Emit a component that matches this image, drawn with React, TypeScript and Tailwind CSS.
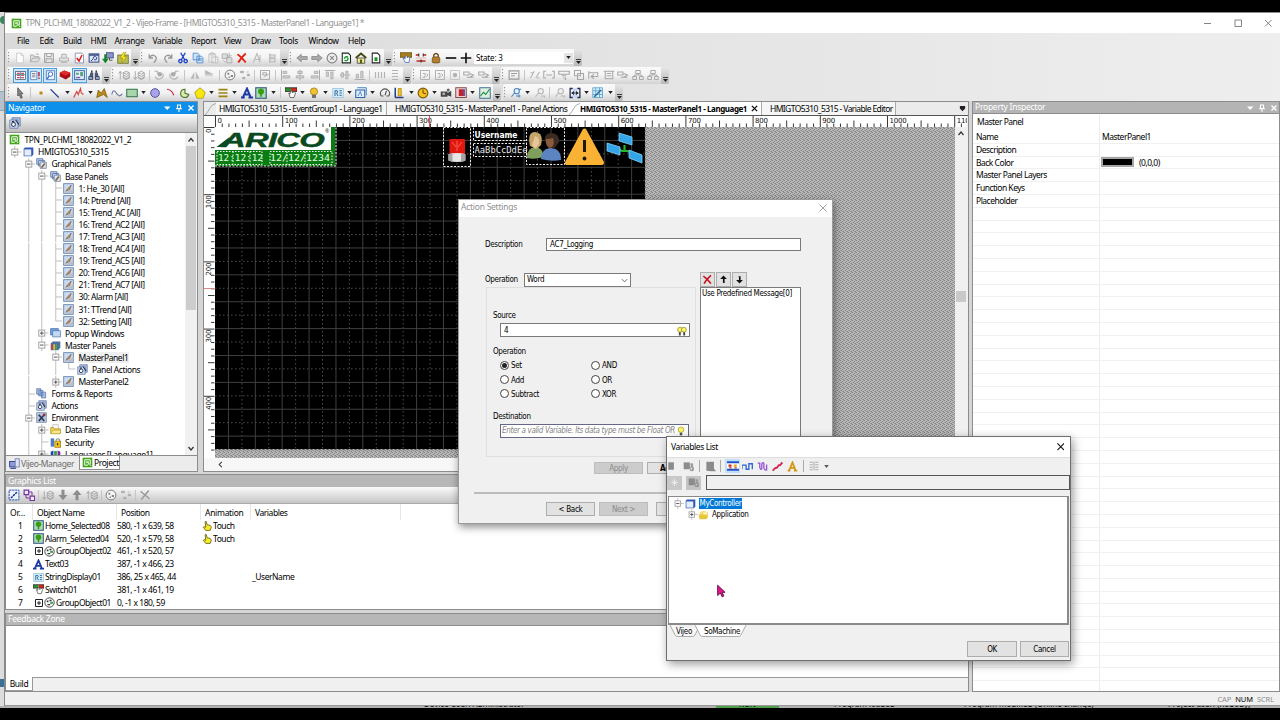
import React from "react";

const UI = "font-['Noto_Sans','Open_Sans',sans-serif]";
const TAHOMA = "font-['DejaVu_Sans_Condensed','DejaVu_Sans',sans-serif]";

const G = "#a3a3a3";

const ICONS: Record<string, React.ReactNode> = {
  app: (<><rect x="1" y="1" width="14" height="14" fill="#43a51c" /><path d="M4 4h8v6M4 4v8h4M8 12l2-3 3 4" fill="none" stroke="#fff" strokeWidth="1.4" /><rect x="6" y="6" width="4" height="3" fill="#c9efb5" /></>),
  page: <path d="M3.500 1.500h6l3 3v10h-9z M9.500 1.500v3h3" fill="#fbfbfb" stroke="#c2c2c2" />,
  open: <path d="M2 13V4h4l1 2h6v2M2 13l3-5h10l-3 5z M9 3q3-2 4 1" fill="#dedede" stroke={G} />,
  save: <path d="M2 2h12v12H2z M5 2v4h6V2 M4 14V9h8v5" fill="#e3e3e3" stroke={G} strokeWidth="1.300" />,
  print: <path d="M2 8h12v4H2z M5 8V3h6v5 M5 12v2h6v-2" fill="#e6e6e6" stroke={G} />,
  check: (<><path d="M3 1.500h9l2 2v11H3z" fill="#fff" stroke="#6f7fa5" /><path d="M5 8l3 4 4-8" fill="none" stroke="#e01818" strokeWidth="2" /></>),
  sim: (<><rect x="1.500" y="2.500" width="13" height="11" fill="#dbe4f8" stroke="#32467d" strokeWidth="1.300" /><path d="M2 4h12" stroke="#32467d" strokeWidth="2" /><path d="M4 12l3-3q-1-3 3-3 3 1 1 4-2 1-3 0" fill="none" stroke="#32467d" strokeWidth="1.300" /></>),
  down: (<><rect x="6" y="1" width="9" height="7" fill="#8b93c9" stroke="#2c3d72" /><path d="M10 8v3h4" stroke="#333" fill="none" /><path d="M3 3v6H0l4.500 6L9 9H6V3z" fill="#14822a" /></>),
  flash: (<><rect x="1" y="4" width="14" height="11" fill="#b6bd55" stroke="#676a28" /><path d="M9 0L4 8h4l-2 7 7-9H9l3-6z" fill="#ffe623" stroke="#967d10" strokeWidth=".7" /></>),
  undo: <path d="M3 3v5h5M3 8q3-5 7-3t1 7l-2 2" fill="none" stroke="#989898" strokeWidth="1.800" />,
  redo: <path d="M13 3v5H8M13 8q-3-5-7-3t-1 7l2 2" fill="none" stroke="#989898" strokeWidth="1.800" />,
  cut: <path d="M5 1l5 9M11 1l-5 9M4.500 10a2.200 2.200 0 1 0 .1 0M11.500 10a2.200 2.200 0 1 0 .1 0" fill="none" stroke="#1d46c5" strokeWidth="1.800" />,
  copy: <path d="M1.500 1.500h6l2 2v7h-8z M6.500 5.500h6l2 2v7h-8z M8 9h5M8 11h5" fill="#cfe5fb" stroke="#3d7fc4" />,
  paste: <path d="M2.500 2.500h9v11h-9z M5 1h4v3H5z M6.500 6.500h8v8h-8z" fill="#ececec" stroke="#bababa" />,
  pastex: <path d="M1.500 2.500h7v6h-7z M7.500 7.500h7v7h-7z M11 1v5M8 4l3 3 3-3M3 11l3 3" fill="#ddd" stroke={G} />,
  redx: <path d="M2 3q6 4 11 11M13 2Q7 7 3 14" fill="none" stroke="#e3200c" strokeWidth="2.400" />,
  ga: <path d="M3 14L8 2l4 12M5 10h6M12 4v8" fill="none" stroke="#bbb" strokeWidth="1.500" />,
  gtree: <path d="M5 2v12M5 4h7v3H5M5 9h7v4H5" fill="none" stroke="#b4b4b4" strokeWidth="1.500" />,
  left: <path d="M1 8l6-5v3h8v4H7v3z" fill="#aaa" stroke="#858585" />,
  right: <path d="M15 8L9 3v3H1v4h8v3z" fill="#aaa" stroke="#858585" />,
  stop: (<><circle cx="8" cy="8" r="6.500" fill="#eee" stroke="#888" strokeWidth="1.600" /><path d="M5.500 5.500l5 5M10.500 5.500l-5 5" stroke="#888" strokeWidth="1.500" /></>),
  refresh: (<><path d="M3 1.500h8l3 3v10H3z" fill="#f3fff2" stroke="#222" strokeWidth="1.400" /><path d="M6 9q1-4 5-2M11 8q-1 5-5 3" fill="none" stroke="#0d9326" strokeWidth="1.700" /></>),
  home: (<><path d="M3 8v7h10V8z" fill="#f3ef9d" stroke="#333" /><path d="M1 8l7-6 7 6" fill="none" stroke="#444a12" strokeWidth="2.400" /><rect x="6.500" y="10" width="3" height="5" fill="#5b5b18" /></>),
  gpage: (<><path d="M3 1.500h7l3 3v10H3z" fill="#fff" stroke="#222" strokeWidth="1.400" /><rect x="6" y="7" width="4" height="5" fill="#1a962a" /></>),
  hand: (<><rect x="0" y="1" width="16" height="6" fill="#a77d1d" stroke="#65490b" /><path d="M4 8l3 6h5l1-6-2-2-1 2-1-3-2 1v3z" fill="#fff" stroke="#4064b0" /></>),
  state: (<><path d="M1 4h4M11 4h4M2 12h12" stroke="#c42318" strokeWidth="1.800" /><path d="M5 2v4M11 2v4M8 10v4" stroke="#333" strokeWidth="1.500" /><path d="M1 8h14" stroke="#d9a395" /></>),
  lock: (<><path d="M5 7V4q3-4 6 0v3" fill="none" stroke="#6a4a12" strokeWidth="1.800" /><rect x="3" y="6.500" width="10" height="8" rx="2" fill="#b67d2c" stroke="#6a4a12" /></>),
  minus: <path d="M1 8h14" stroke="#111" strokeWidth="2.200" />,
  plus: <path d="M1 8h14M8 1v14" stroke="#111" strokeWidth="2.200" />,
  t1: (<><rect x="1" y="2" width="14" height="12" fill="#fff" stroke="#345" /><path d="M3 5h4M9 5h4M3 8h4M9 8h4M3 11h4M9 11h4" stroke="#c23c7b" strokeWidth="1.700" /><path d="M8 2v12M1 6.500h14" stroke="#3a8c61" /></>),
  t2: (<><path d="M1 2h9v12H1z" fill="#fff" stroke="#3161ac" /><path d="M3 5h5M3 7.500h5M3 10h5" stroke="#446" /><path d="M13 3v6M13 11v2" stroke="#c01b1b" strokeWidth="2" /></>),
  t3: (<><path d="M2 1h12v13H2z" fill="#eaf4ff" stroke="#3161ac" /><circle cx="8" cy="6" r="3.200" fill="#fff" stroke="#2b64c0" strokeWidth="1.300" /><path d="M6 9l-3 4" stroke="#2b64c0" strokeWidth="1.800" /></>),
  red3d: (<><path d="M1 5l6-3 8 3v5l-6 4-8-4z" fill="#a80f16" /><path d="M1 5l6-3 8 3-6 4z" fill="#e12a2a" /></>),
  t5: (<><rect x="1" y="1" width="14" height="13" fill="#e8f0ff" stroke="#36588e" strokeWidth="1.300" /><path d="M3 4h4v3H3zM9 3h4v6H9z" fill="#58a07e" /><path d="M3 11h6" stroke="#7b5ca8" strokeWidth="2" /></>),
  find: (<><path d="M3 5h4v9H1zM9 5h4l2 9H9z" fill="#4b5978" /><path d="M4 2h2v3H4zM10 2h2v3h-2z" fill="#2b364f" /><path d="M1 10h5v4H1zM10 10h5v4h-5z" fill="#91a4c9" stroke="#333d55" /></>),
  layers: <path d="M3 14V4M1 6l2-3 2 3M7 5l4-2 4 2-4 2zM7 5v7l4 2 4-2V5M7 8l4 2 4-2M7 11l4 2 4-2" fill="none" stroke={G} strokeWidth="1.200" />,
  layersd: <path d="M3 3v10M1 11l2 3 2-3M7 5l4-2 4 2-4 2zM7 5v7l4 2 4-2V5M7 8l4 2 4-2M7 11l4 2 4-2" fill="none" stroke={G} strokeWidth="1.200" />,
  rotl: (<><path d="M2 3h4v3M13 6q2 5-3 7t-7-3" fill="none" stroke="#b3b3b3" strokeWidth="1.500" /><circle cx="9" cy="7" r="3" fill="#aaa" /></>),
  rotr: (<><path d="M14 3h-4v3M3 6q-2 5 3 7t7-3" fill="none" stroke="#b3b3b3" strokeWidth="1.500" /><circle cx="7" cy="7" r="3" fill="#aaa" /></>),
  flip: <path d="M2 13L7 4v9zM9 13V3l5 10z" fill="#bababa" />,
  flipv: <path d="M3 2l10 5H3zM3 9h10" fill="#b5b5b5" stroke="#bbb" />,
  group: (<><circle cx="8" cy="8" r="6.500" fill="#f6f6f6" stroke="#777" strokeWidth="1.300" /><path d="M4.500 5h2.500v2.500H4.500zM9 8h3v2.500H9zM6 10h2v2H6z" fill="#888" /></>),
  ungroup: <path d="M2 3h4v2H2zM10 4h3M11 7h3v2h-3zM5 11h3v2H5z" fill="#aaa" stroke="#aaa" />,
  box: <path d="M2 2h12v12H2zM5 5h5v3H5zM7 10l6-3" fill="none" stroke="#aaa" strokeWidth="1.300" />,
  al1: (<><path d="M2 1v14" stroke="#aaa" strokeWidth="1.300" /><path d="M4 3h5v3H4zM4 9h9v3H4z" fill="#cfcfcf" stroke="#aaa" /></>),
  al2: (<><path d="M8 1v14" stroke="#aaa" strokeWidth="1.300" /><path d="M5 3h6v3H5zM3 9h10v3H3z" fill="#cfcfcf" stroke="#aaa" /></>),
  al3: (<><path d="M14 1v14" stroke="#aaa" strokeWidth="1.300" /><path d="M7 3h5v3H7zM3 9h9v3H3z" fill="#cfcfcf" stroke="#aaa" /></>),
  al4: (<><path d="M1 2h14" stroke="#aaa" strokeWidth="1.300" /><path d="M3 4h3v6H3zM9 4h3v9H9z" fill="#cfcfcf" stroke="#aaa" /></>),
  al5: (<><path d="M1 8h14" stroke="#aaa" strokeWidth="1.300" /><path d="M3 5h3v6H3zM9 3h3v10H9z" fill="#cfcfcf" stroke="#aaa" /></>),
  al6: (<><path d="M1 14h14" stroke="#aaa" strokeWidth="1.300" /><path d="M3 7h3v5H3zM9 3h3v9H9z" fill="#cfcfcf" stroke="#aaa" /></>),
  sp1: <path d="M2 4v8M6 4v8M10 4v8M14 4v8" fill="none" stroke="#b3b3b3" strokeWidth="1.500" />,
  sp2: <path d="M4 2h8M4 6h8M4 10h8M4 14h8" fill="none" stroke="#b3b3b3" strokeWidth="1.300" />,
  gbox: <path d="M2 2h12v12H2zM5 6h3v5H5M10 6l2 2-2 2" fill="none" stroke="#b0b0b0" strokeWidth="1.300" />,
  gdot: (<><path d="M2 2h12v12H2z" fill="none" stroke="#bbb" /><circle cx="8" cy="8" r="3" fill="#b3b3b3" /></>),
  gform: <path d="M1.500 2.500h13v11h-13zM4 6h8M4 9h5" fill="none" stroke="#9a9a9a" strokeWidth="1.500" />,
  gline: <path d="M2 12L7 3M9 12l5-8M2 5h3M11 12h3" fill="none" stroke="#b0b0b0" strokeWidth="1.400" />,
  gbr: <path d="M4 3H1v9h3M12 3h3v9h-3M4 8h8" fill="none" stroke="#a7a7a7" strokeWidth="1.400" />,
  gfun: <path d="M1 3h14v4H1zM5 9h6M7 12h3v3" fill="none" stroke="#a7a7a7" strokeWidth="1.500" />,
  gst: <path d="M2 2h8v7H2zM6 6h8v8H6z" fill="none" stroke="#a7a7a7" strokeWidth="1.400" />,
  gpile: <path d="M1 3h14M3 3v10h10V3M5 6h6M5 9h6" fill="none" stroke="#a7a7a7" strokeWidth="1.400" />,
  garr: <path d="M1 3v10M1 5h12v5H5M8 7l-4 3 4 3" fill="none" stroke="#a7a7a7" strokeWidth="1.400" />,
  garr2: <path d="M1 4h7v4H1zM5 11h9M9 6l5 2-5 3" fill="none" stroke="#a7a7a7" strokeWidth="1.400" />,
  gtr: <path d="M5 2h6v4H5zM1 10h5v4H1zM10 10h5v4h-5zM8 6v2H3v2M8 8h5v2" fill="none" stroke="#a7a7a7" strokeWidth="1.300" />,
  cursor: <path d="M5 1l7 8H9l2 5-2 1-2-5-2 2z" fill="#888" stroke="#444" />,
  dot: <rect x="6" y="6" width="4" height="4" fill="#c28a12" />,
  line: <path d="M2 3l11 11" stroke="#243f95" strokeWidth="1.500" />,
  poly: <path d="M1 14l4-8 2 4 3-8 1 6 3 2" fill="none" stroke="#d1403a" strokeWidth="1.500" />,
  bez: <path d="M1 14L3 4l4 4 4-6 4 12-5-4z" fill="#b98b1d" stroke="#7e5a0b" />,
  curve: <path d="M1 10Q3 1 7 8t8 1" fill="none" stroke="#68739c" strokeWidth="1.500" />,
  rect: <rect x="1" y="3" width="14" height="10" fill="#a8d6ac" stroke="#2d7045" strokeWidth="1.300" />,
  circ: <circle cx="8" cy="8" r="5.800" fill="#a7a4e8" stroke="#5450a0" strokeWidth="1.300" />,
  arc: <path d="M4 3q7 1 9 8" fill="none" stroke="#cf2b3d" strokeWidth="1.600" />,
  pie: <path d="M8 3a5.500 5.500 0 1 0 5 7L8 8.500z" fill="#d9edab" stroke="#58763a" strokeWidth="1.500" />,
  pent: <path d="M8 1l7 6-3 8H4L1 7z" fill="#f8e70e" stroke="#a8920d" />,
  lines: <path d="M2 3.500h12M2 8h12M2 12.500h12" stroke="#9d8316" strokeWidth="2.200" />,
  A: <path d="M0 14h5M10 14h6M2.500 14L8 2l5 12M5 10h6" fill="none" stroke="#1c38a4" strokeWidth="2.600" />,
  tree: (<><rect x="1" y="1" width="14" height="14" fill="#a6dcb5" stroke="#3c5c86" strokeWidth="1.500" /><circle cx="8" cy="6" r="4" fill="#379d12" /><path d="M7 9h2v4h3H5h2z" fill="#4c7d18" /></>),
  sw: (<><rect x="0" y="1" width="8" height="5" fill="#2f912d" /><rect x="8" y="1" width="8" height="5" fill="#d02b20" /><path d="M0 1h16v5H0z" fill="none" stroke="#222" /><path d="M5 8l2 6h5l2-6-2-2-2 2-1-3-2 1v3z" fill="#fff" stroke="#444" /></>),
  bulb: (<><circle cx="8" cy="6" r="4.800" fill="#f0c431" stroke="#a1710c" /><path d="M6 11h4v3H6z" fill="#777" stroke="#555" /></>),
  ylamp: (<><circle cx="8" cy="6" r="4.500" fill="#fbf46c" stroke="#9a8b16" /><path d="M6 11h4v4H6z" fill="#555" /></>),
  lamps: (<><circle cx="5" cy="6" r="4" fill="#fbf46c" stroke="#847510" /><circle cx="11" cy="6" r="4" fill="#fbf46c" stroke="#847510" /><path d="M3 10h3v5H3zM10 10h3v5h-3z" fill="#444" /></>),
  strd: (<><rect x="1" y="2" width="14" height="12" fill="#d8edf8" stroke="#8fc1de" /><path d="M4 12V5h3q2 2-1 3l2 4M10 5h3M10 8h3M10 11h3" fill="none" stroke="#24659a" strokeWidth="1.300" /></>),
  ab: (<><path d="M3 1h12v10" fill="none" stroke="#3d7ec7" strokeWidth="1.300" /><rect x="1" y="4" width="12" height="10" fill="#e2f0ff" stroke="#2c64ab" strokeWidth="1.400" /><path d="M4 12l3-6 2 6" fill="none" stroke="#2c64ab" /></>),
  gauge: <path d="M3 12a6 6 0 1 1 10 0M8 11l2-6M3 12h3M10 12h3" fill="none" stroke="#555" strokeWidth="1.500" />,
  bars: (<><path d="M3 1v13M3 14h11" stroke="#223c8e" strokeWidth="2" /><path d="M7 2h4v10H7z" fill="#f0c81c" stroke="#ab7c07" /></>),
  meter: (<><circle cx="8" cy="8" r="6.500" fill="#f2c21e" stroke="#7c560b" strokeWidth="1.500" /><path d="M8 3v5l4 1" stroke="#7c3b0b" strokeWidth="1.300" fill="none" /></>),
  cam: (<><path d="M1 6h9v7H1zM10 8l5-3v8l-5-2z" fill="#454545" /><circle cx="5" cy="9" r="2" fill="#aaa" /><circle cx="11" cy="4" r="2" fill="#666" /></>),
  reda: (<><rect x="1" y="1" width="14" height="13" fill="#e4d8dc" stroke="#844" strokeWidth="1.300" /><path d="M5 3h6v9H5z" fill="#cc1e24" /><path d="M12 3v9" stroke="#339" strokeWidth="2" /></>),
  trend: (<><rect x="1" y="1" width="14" height="14" fill="#dbf0e0" stroke="#3e6a8f" strokeWidth="1.300" /><path d="M2 12l4-5 3 3 5-7" fill="none" stroke="#1a8b3d" strokeWidth="1.500" /></>),
  zoomc: (<><circle cx="9" cy="5.500" r="3.500" fill="#e4f2ff" stroke="#4c84ba" strokeWidth="1.400" /><path d="M2 13l4-5M11 3h4M8 12h6M12 10v4" fill="none" stroke="#4c84ba" strokeWidth="1.500" /></>),
  zoomg: (<><circle cx="9" cy="5.500" r="3.500" fill="#efefef" stroke="#b5b5b5" strokeWidth="1.400" /><path d="M2 13l4-5M9 12h5v2" fill="none" stroke="#b5b5b5" strokeWidth="1.500" /></>),
  fit: (<><path d="M1.500 1v14M14.500 1v14M1 2h4M11 2h4M1 14h4M11 14h4" stroke="#222c50" strokeWidth="1.700" /><path d="M5 2h6v12H5z" fill="#c2d1f4" /><path d="M3 8h10M4 8l2-2v4zM12 8l-2-2v4z" fill="#222" stroke="#222" /></>),
  gridi: (<><path d="M1 1h13v13H1zM1 5h13M1 10h13M5 1v13M10 1v13" fill="#d5effa" stroke="#4b9bc0" /><path d="M3 13l9-9" stroke="#2b64a6" strokeWidth="2" /></>),
  device: (<><path d="M3 2h12v10l-2 3H1V4z" fill="#3156b4" /><rect x="2" y="5" width="10" height="9" fill="#e4eefc" /></>),
  panels: (<><path d="M1 1h9v8H1zM3.500 3.500h9v8h-9z" fill="#c8d5ee" stroke="#5372a8" strokeWidth="1.200" /><path d="M6 6h9v9H6z" fill="#e6e6e6" stroke="#5d7091" /><path d="M8 14l5-6" stroke="#7c6a52" strokeWidth="2.400" /></>),
  panel: (<><rect x="1" y="1" width="14" height="14" fill="#cadcf3" stroke="#6580ab" strokeWidth="1.300" /><path d="M2 14h13V8z" fill="#b8bfca" /><path d="M4 12l3-4 5-5-2 6z" fill="#c98a52" stroke="#72523a" strokeWidth=".8" /></>),
  popup: (<><rect x="1" y="1" width="11" height="9" fill="#6e9fe0" stroke="#3e66a5" /><rect x="4" y="4" width="11" height="9" fill="#bfd8f6" stroke="#4c70a3" /></>),
  master: (<><path d="M1 5l3-3h11v9l-3 4H1z" fill="#4b6fa0" /><path d="M3 6v8" stroke="#da392d" strokeWidth="2.200" /><path d="M6 6v8" stroke="#edcb32" strokeWidth="2.200" /><path d="M9 6v8" stroke="#42aa42" strokeWidth="2.200" /></>),
  actions: (<><path d="M4 1h11v11H4z" fill="#a9bbdf" stroke="#6479a8" /><path d="M1 4h11v11H1z" fill="#c9d5ec" stroke="#6479a8" /><circle cx="6" cy="10" r="2.600" fill="#fff" stroke="#32415f" strokeWidth="1.400" /><path d="M9 4l4 6M4 6l3 0" stroke="#222f4f" strokeWidth="1.500" /></>),
  forms: <path d="M1 1h6v8H1zM4 3.500h6v8H4zM8 6h6v8.500H8z" fill="#a9c0ea" stroke="#4f6da6" />,
  env: (<><rect x="1" y="1" width="14" height="14" fill="#b5c3dc" stroke="#6f83a6" /><path d="M4 4l8 9M12 4l-8 9" stroke="#2c3753" strokeWidth="2.300" /><circle cx="12" cy="4" r="2" fill="#933" /></>),
  folder: (<><path d="M4 1h8v8H4z" fill="#fff" stroke="#aaa" /><path d="M1 14V5h4l1 2h9v7z" fill="#f3d54e" stroke="#ae8b1b" /><path d="M1 14l3-5h12l-2 5z" fill="#fbe990" stroke="#ae8b1b" strokeWidth=".7" /></>),
  folderOpen: (<><path d="M3 5q4-4 11 0v8H3z" fill="#f1dd71" /><path d="M1 8h9l4-3v8l-3 2H2z" fill="#e8c63c" /><path d="M8 5h5v3H8z" fill="#fff8c9" /></>),
  security: (<><rect x="1" y="2" width="5" height="12" fill="#4f7cc4" /><path d="M9 7V4q2.500-3 5 0v3" fill="none" stroke="#888" strokeWidth="1.500" /><rect x="7" y="6" width="8.500" height="9" fill="#f1c01b" stroke="#9b7c08" /><path d="M11 9v3" stroke="#333" strokeWidth="1.800" /></>),
  lang: (<><path d="M1 4l4-2v13H1z" fill="#2442a8" /><path d="M6 3h4v12H6z" fill="#349a43" /><path d="M11 2l4 2v11h-4z" fill="#7a27a3" /></>),
  vman: (<><rect x="1" y="5" width="9" height="8" fill="#8d9ed8" stroke="#243a85" strokeWidth="1.300" /><path d="M9 1h6v12H9z" fill="#dce3f2" stroke="#5c6b99" /><path d="M2 15h8" stroke="#243a85" strokeWidth="1.500" /></>),
  glPen: (<><path d="M1.500 1.500h13v13h-13z" fill="#eef4ff" stroke="#1f4db0" strokeDasharray="3 1" strokeWidth="1.300" /><path d="M4 12l8-8" stroke="#162f83" strokeWidth="2" strokeDasharray="3 1" /></>),
  glLink: (<><path d="M1.500 1.500h6v6h-6zM9.500 9.500h6v6h-6z" fill="#f4e9fb" stroke="#7434a0" strokeWidth="1.600" /><path d="M4 8v4h5M8 4h4v5" fill="none" stroke="#7434a0" strokeWidth="1.300" /></>),
  adown: <path d="M6 1h4v7h4l-6 7-6-7h4z" fill="#8d8d8d" />,
  aup: <path d="M6 15h4V8h4L8 1 2 8h4z" fill="#8d8d8d" />,
  gx: <path d="M2 3l12 10M13 2L3 14" stroke="#999" strokeWidth="1.900" />,
  touch: <path d="M5 1h2l1 5 5 1 2 3-2 5H6l-4-5 1-1 3 1z" fill="#f9ee22" stroke="#3e3a08" strokeWidth="1.100" />,
  groupb: (<><circle cx="8" cy="8" r="6.800" fill="#fff" stroke="#333" strokeWidth="1.300" /><path d="M4 5h2.500v2.500H4zM8 4h3v2H8zM5 10h4v2H5z" fill="#333" /><rect x="9" y="7" width="4" height="3" fill="#37a34b" /></>),
  xbtn: <path d="M2 3q6 4 11 11M13 2Q7 7 3 14" fill="none" stroke="#c5101c" strokeWidth="2.300" />,
  upb: <path d="M8 1l6 6h-4v7H7V7H2z" fill="#111" />,
  dnb: <path d="M8 15l6-6h-4V2H6l1 2v5H2z" fill="#111" />,
  sq: <path d="M2 2h9v12H2z" fill="#8c8c8c" />,
  sqs: (<><path d="M1 2h9v10H1z" fill="#8c8c8c" /><path d="M11 4h3v9h-3M11 9v5h4V9z" fill="#a0a0a0" stroke="#8c8c8c" /></>),
  blob: <path d="M2 1h11v10l3 4H9l-7-1z" fill="#8a8a8a" />,
  disc: (<><rect x="0" y="2" width="16" height="12" fill="#fff" /><path d="M0 3h16M0 13h16" stroke="#2151c4" strokeWidth="2.500" /><path d="M2 6h4v3H2z" fill="#d02525" /><path d="M9 6h4v3H9z" fill="#e5a21a" /><path d="M3 10.500h3M10 10.500h3" stroke="#b33" strokeWidth="1.500" /></>),
  step: <path d="M0 12V6h6v6h4V4h5v8" fill="none" stroke="#2f64d4" strokeWidth="1.900" />,
  wave: <path d="M1 3h3v6q1 5 3 2V4q2-3 3 0v6q1 4 4 3V5" fill="none" stroke="#9355d3" strokeWidth="1.900" />,
  diag: <path d="M1 14l4-4h2l3-4h2l3-4" fill="none" stroke="#d32350" strokeWidth="2.600" />,
  goldA: <path d="M1 14h4M10 14h5M3 14L8 2l4.500 12M5 10h6" fill="none" stroke="#d59512" strokeWidth="2.500" />,
  glist: <path d="M1 2h5M1 6h5M1 10h5M1 14h5M10 2h5M10 6h5M10 10h5M10 14h5M8 1v14" stroke="#9c9c9c" strokeWidth="1.300" />,
  star: <path d="M8 2v12M2 8h12M4 4l8 8M12 4l-8 8" stroke="#f2f2f2" strokeWidth="1.300" />,
};

function Icon({ n, c = "size-[12px]" }: { n: string; c?: string }) {
  return (
    <svg viewBox="0 0 16 16" className={`${c} shrink-0`}>
      {ICONS[n]}
    </svg>
  );
}

function Tool({ n }: { n: string }) {
  if (n === "|") return <span className="mx-[2px] h-[11px] w-px shrink-0 bg-[#c6c6c6]" />;
  if (n === "v")
    return (
      <span className="flex w-[8px] shrink-0 justify-center">
        <svg viewBox="0 0 6 4" className="h-[3px] w-[5px]"><path d="M0 0h6L3 4z" fill="#222" /></svg>
      </span>
    );
  if (n[0] === "*")
    return (
      <span className="flex h-[15px] w-[14.5px] shrink-0 items-center justify-center border border-[#4da0e0] bg-[#cbe6fb]">
        <Icon n={n.slice(1)} c="size-[11px]" />
      </span>
    );
  return <span className="flex w-[14px] shrink-0 justify-center"><Icon n={n} /></span>;
}

function Bar({ w, items, children }: { w: string; items: string; children?: React.ReactNode }) {
  return (
    <div className={`${w} flex h-[17px] shrink-0 items-center rounded-[2px] bg-linear-to-b from-[#fafafa] via-[#f3f3f3] to-[#d2d2d2]`}>
      <svg viewBox="0 0 4 12" className="mr-[2px] h-[12px] w-[4px] shrink-0"><path d="M1.500 0v12" stroke="#999" strokeWidth="1.200" strokeDasharray="1.2 1.800" /></svg>
      <div className="flex min-w-0 flex-1 items-center justify-between">
        {items.split(" ").map((n, i) => <Tool key={i} n={n} />)}
        {children}
      </div>
      <span className="ml-[1px] flex h-full w-[8px] shrink-0 items-end justify-center rounded-r-[2px] bg-linear-to-b from-[#e6e6e6] to-[#b9b9b9] pb-[2px]">
        <svg viewBox="0 0 6 6" className="size-[5px]"><path d="M0 .6h6" stroke="#222" /><path d="M0 2.500h6L3 6z" fill="#222" /></svg>
      </span>
    </div>
  );
}

const TREE: [string, string, string][] = [
  ["", "app", "TPN_PLCHMI_18082022_V1_2"],
  ["-", "device", "HMIGTO5310_5315"],
  [" -", "panels", "Graphical Panels"],
  [" |-", "panels", "Base Panels"],
  [" ||t", "panel", "1: He_30 [All]"],
  [" ||t", "panel", "14: Ptrend [All]"],
  [" ||t", "panel", "15: Trend_AC [All]"],
  [" ||t", "panel", "16: Trend_AC2 [All]"],
  [" ||t", "panel", "17: Trend_AC3 [All]"],
  [" ||t", "panel", "18: Trend_AC4 [All]"],
  [" ||t", "panel", "19: Trend_AC5 [All]"],
  [" ||t", "panel", "20: Trend_AC6 [All]"],
  [" ||t", "panel", "21: Trend_AC7 [All]"],
  [" ||t", "panel", "30: Alarm [All]"],
  [" ||t", "panel", "31: TTrend [All]"],
  [" ||l", "panel", "32: Setting [All]"],
  [" |+", "popup", "Popup Windows"],
  [" |-", "master", "Master Panels"],
  [" | -", "panel", "MasterPanel1"],
  [" | |l", "actions", "Panel Actions"],
  [" | +", "panel", "MasterPanel2"],
  [" t", "forms", "Forms & Reports"],
  [" t", "actions", "Actions"],
  [" -", "env", "Environment"],
  [" |+", "folder", "Data Files"],
  [" |t", "security", "Security"],
  [" |+", "lang", "Languages [Language1]"],
];

function Guide({ k }: { k: string }) {
  const d: Record<string, string> = { "|": "M6.750 0v12.100", t: "M6.750 0v12.100M6.750 6h6.750", l: "M6.750 0v6h6.750", "+": "M6.750 0v12.100M10 6h3.500", "-": "M6.750 0v12.100M10 6h3.500", " ": "" };
  return (
    <svg viewBox="0 0 13.500 12.100" className="h-full w-[13.500px] shrink-0">
      <path d={d[k]} stroke="#b9b9b9" strokeWidth=".9" fill="none" />
      {(k === "+" || k === "-") && (
        <>
          <rect x="3.800" y="3.100" width="6" height="6" fill="#fff" stroke="#9a9a9a" strokeWidth=".9" />
          <path d={k === "+" ? "M5 6.100h3.600M6.800 4.300v3.600" : "M5 6.100h3.600"} stroke="#444" strokeWidth=".9" />
        </>
      )}
    </svg>
  );
}

function HeadIcons({ gap = "gap-[4px]" }: { gap?: string }) {
  return (
    <span className={`flex items-center ${gap}`}>
      <svg viewBox="0 0 8 8" className="size-[8px]"><path d="M1 2.500h6.500L4.200 6z" fill="#fff" /></svg>
      <svg viewBox="0 0 8 8" className="size-[8px]"><path d="M2.500 1h3v3.500h-3zM1 4.700h6M4 5v3" fill="none" stroke="#fff" strokeWidth="1.100" /></svg>
      <svg viewBox="0 0 8 8" className="size-[8px]"><path d="M1.500 1.500l5 5M6.500 1.500l-5 5" stroke="#fff" strokeWidth="1.400" /></svg>
    </span>
  );
}

function Navigator() {
  return (
    <section className="flex h-[371px] w-[193px] shrink-0 flex-col border border-[#8c8c8c] bg-[#f0f0f0]">
      <header className="flex h-[12px] shrink-0 items-center justify-between bg-[#0d90ec] pr-[2px] pl-[2px] tracking-[-0.250px] text-white">
        <span>Navigator</span>
        <HeadIcons />
      </header>
      <div className="flex h-[18px] shrink-0 items-center bg-linear-to-b from-[#fbfbfb] to-[#bdbdbd] pl-[3px]"><Icon n="actions" /></div>
      <div className="flex h-[324px] shrink-0 overflow-hidden border-y border-[#8c8c8c] bg-white">
        <div className="flex-1 overflow-hidden pt-[0.700px] pl-[2px]">
          {TREE.map(([g, ic, t], i) => (
            <div key={i} className="flex h-[12.100px] items-center">
              {g.split("").map((k, j) => <Guide key={j} k={k} />)}
              <span className="flex w-[13.500px] justify-center"><Icon n={ic} c="size-[11px]" /></span>
              <span className={t === "MasterPanel1" ? "ml-[2px] bg-[#efefef] px-px leading-[11px] whitespace-nowrap" : "ml-[3px] leading-[11px] whitespace-nowrap"}>{t}</span>
            </div>
          ))}
        </div>
        <div className="flex w-[12px] flex-col items-center bg-[#f1f1f1]">
          <svg viewBox="0 0 8 12" className="h-[13px] w-[8px]"><path d="M1.500 8L4 5l2.500 3" fill="none" stroke="#333" strokeWidth="1.200" /></svg>
          <div className="h-[164px] w-[10px] bg-[#cdcdcd]" />
          <svg viewBox="0 0 8 12" className="mt-auto h-[12px] w-[8px]"><path d="M1.500 4L4 7l2.500-3" fill="none" stroke="#333" strokeWidth="1.200" /></svg>
        </div>
      </div>
      <div className="flex h-[14px] items-center bg-[#ececec] leading-[11px]">
        <span className="flex h-full w-[73px] items-center gap-[1px] pl-[3px] tracking-[-0.400px] whitespace-nowrap text-[#6b6b6b]"><Icon n="vman" c="size-[11px]" />Vijeo-Manager</span>
        <span className="flex h-full w-[41px] items-center gap-[1px] border-x border-b border-[#8c8c8c] bg-white pl-[2px]"><Icon n="app" c="size-[11px]" />Project</span>
      </div>
    </section>
  );
}

const U = 0.672;

function Canvas() {
  const xs = Array.from({ length: 32 }, (_, i) => i + 1);
  const ys = Array.from({ length: 24 }, (_, i) => i + 1);
  return (
    <svg width="751" height="331" viewBox="204 127 751 331" className="shrink-0">
      <defs>
        <pattern id="dither" width="4" height="4" patternUnits="userSpaceOnUse">
          <rect width="4" height="4" fill="#b9b9b9" />
          <path d="M0 0h1v1H0zM2 1h1v1H2zM1 2h1v1H1zM3 3h1v1H3z" fill="#848484" />
          <path d="M3 0h1v1H3zM0 2h1v1H0zM2 3h1v1H2z" fill="#9d9d9d" />
        </pattern>
      </defs>
      <rect x="215" y="127" width="740" height="331" fill="url(#dither)" />
      <rect x="215" y="127" width="430" height="322" fill="#000" />
      {xs.map((i) => <path key={i} d={`M${215 + i * 13.44} 127V449`} stroke={i % 2 ? "#3f3f3f" : "#4d4d4d"} strokeDasharray={i % 2 ? undefined : "1.500 2.500"} />)}
      {ys.map((i) => <path key={i} d={`M215 ${127 + i * 13.44}H645`} stroke={i % 2 ? "#3f3f3f" : "#4d4d4d"} strokeDasharray={i % 2 ? undefined : "1.500 2.500"} />)}
      <rect x="204" y="127" width="11" height="331" fill="#fff" />
      {Array.from({ length: 49 }, (_, i) => (
        <path key={i} d={`M${i % 10 === 0 ? 204 : i % 5 === 0 ? 208 : 211} ${127.5 + i * 10 * U}H214.500`} stroke="#222" strokeWidth=".9" />
      ))}
      {[0, 100, 200, 300, 400].map((v) => (
        <text key={v} transform={`translate(210.500 ${129 + v * U + (v ? 12 : 4)}) rotate(-90)`} fontSize="7" letterSpacing="-.2" className="font-['DejaVu_Sans',sans-serif]" fill="#111">{v}</text>
      ))}
      <path d="M204 288.500h11" stroke="#d88" />
      <rect x="215" y="127" width="120" height="39" fill="#0a7d12" />
      <rect x="215" y="127" width="116" height="23" fill="#fff" />
      <text x="222" y="147" fontSize="19.500" fontWeight="bold" fontStyle="italic" textLength="102" lengthAdjust="spacingAndGlyphs" className="font-['Liberation_Sans',sans-serif]" fill="#0a4a20" stroke="#0a4a20" strokeWidth=".4">ARICO</text>
      <path d="M216.500 147l13-10-4 10z" fill="#0a4a20" />
      <text x="325" y="132.500" fontSize="5" letterSpacing="0" fill="#333">®</text>
      <path d="M217 151.500h45v13h-45zM270 151.500h62v13h-62z M287 151.500v13M305 151.500v13M233 151.500v13M250 151.500v13" fill="none" stroke="#fff" strokeDasharray="1.500 1.500" />
      <path d="M215 166h121V127" fill="none" stroke="#d8f5d8" strokeDasharray="2 1.500" />
      <text x="218" y="160.500" fontSize="9.500" letterSpacing="0" textLength="45" lengthAdjust="spacingAndGlyphs" className="font-['DejaVu_Sans_Mono',monospace]" fill="#e2ffe2">12:12:12</text>
      <text x="270" y="160.500" fontSize="9.500" letterSpacing="0" textLength="60" lengthAdjust="spacingAndGlyphs" className="font-['DejaVu_Sans_Mono',monospace]" fill="#e2ffe2">12/12/1234</text>
      <path d="M443.500 127.500h27v39h-27zM473.500 143.500h53v13h-53zM473.500 127.500v13h53M526.500 127.500h38v37h-38z" fill="none" stroke="#eee" strokeDasharray="2 1.500" />
      <rect x="449.500" y="139" width="15.500" height="15" rx="1" fill="#e01810" />
      <path d="M452 142l4 5M462 142l-4 5M457 141v10" stroke="#ff6a58" strokeWidth=".9" />
      <path d="M448.500 154q8.500-2 17 0v6.500q-8.500 3-17 0z" fill="#e6e6e6" />
      <path d="M448.500 154h4v8l-4-1.500zM461 154h4v7l-4 1z" fill="#a5a5a5" />
      <text x="474.500" y="138" fontSize="8.500" letterSpacing="0" fontWeight="bold" textLength="43" lengthAdjust="spacingAndGlyphs" className="font-['DejaVu_Sans',sans-serif]" fill="#fff">Username</text>
      <text x="474.500" y="153" fontSize="8.500" letterSpacing="0" textLength="53" lengthAdjust="spacingAndGlyphs" className="font-['DejaVu_Sans_Mono',monospace]" fill="#e8e8e8">AaBbCcDdEe</text>
      <path d="M527 158q0-10 8-11 9 1 8 10-8 3-16 1z" fill="#7ea05c" />
      <path d="M530 146q-3-14 5-14 9 1 6 13l-4 4z" fill="#c4a568" />
      <path d="M535 136q5 1 4 8l-4 5-3-4z" fill="#e8c49a" />
      <path d="M541 159q0-10 9-11 11 0 11 12-10 2-20-1z" fill="#5b84c1" />
      <path d="M545 141q-1-8 7-8 8 1 7 9l-5 7-6-3z" fill="#3c2b22" />
      <path d="M546 139q4 0 7-1 2 6-1 9l-3 1q-4-3-3-9z" fill="#8a5a3c" />
      <path d="M583 129q1.500-1 3 0l18 33q0 3-2 3h-36q-2-1-1-3z" fill="#f9b233" />
      <path d="M584.500 140v12" stroke="#1d1a12" strokeWidth="3" /><circle cx="584.500" cy="158.500" r="1.900" fill="#1d1a12" />
      <path d="M624.500 145v7M621 151h7M618 149l4 2M627 151l4 1" stroke="#27b32b" strokeWidth="2.200" />
      <path d="M619 133l13 4v8l-13-4zM607 143l13 4v8l-13-4zM629 150l13 5v8l-13-5z" fill="#34a6e8" stroke="#86d2fa" strokeWidth=".8" />
    </svg>
  );
}

function Ruler() {
  return (
    <svg width="763" height="11" viewBox="204 116 763 11" className="shrink-0 bg-white">
      {Array.from({ length: 112 }, (_, i) => (
        <path key={i} d={`M${215.500 + i * 10 * U} ${i % 10 === 0 ? 116 : i % 5 === 0 ? 120.500 : 123.500}V127`} stroke="#222" strokeWidth=".9" />
      ))}
      {Array.from({ length: 12 }, (_, i) => (
        <text key={i} x={217.500 + i * 100 * U} y="122.500" fontSize="7" letterSpacing="-.2" className="font-['DejaVu_Sans',sans-serif]" fill="#111">{i * 100}</text>
      ))}
      <path d="M429.500 116v11" stroke="#e05050" />
    </svg>
  );
}

function Slant() {
  return <svg viewBox="0 0 12 12" className="h-[12px] w-[12px] shrink-0"><path d="M1 12Q4 9 6 5T12 .5" fill="none" stroke="#999" strokeWidth=".8" /></svg>;
}

function Docs() {
  return (
    <section className="flex h-[371px] w-[766px] shrink-0 flex-col border border-[#8c8c8c] bg-[#f0f0f0]">
      <div className="flex h-[14px] shrink-0 items-center border-b border-[#555] bg-[#ebebeb] leading-[12px] tracking-[-0.600px] whitespace-nowrap">
        <Slant />
        <span className="flex h-full w-[171px] items-center border-r border-[#aaa] bg-[#f6f6f6] pl-[3px]">HMIGTO5310_5315 - EventGroup1 - Language1</span>
        <span className="flex h-full w-[181px] items-center bg-[#f6f6f6] pl-[8px]">HMIGTO5310_5315 - MasterPanel1 - Panel Actions</span>
        <span className="flex h-full w-[193px] items-center bg-white"><Slant /><b className="text-[8px] tracking-[-0.440px]">HMIGTO5310_5315 - MasterPanel1 - Language1</b>
          <svg viewBox="0 0 8 8" className="mr-[3px] ml-auto size-[7px]"><path d="M1 1l6 6M7 1L1 7" stroke="#111" strokeWidth="1.600" /></svg></span>
        <span className="flex h-full w-[135px] items-center border-x border-[#aaa] bg-[#f6f6f6] pl-[8px]">HMIGTO5310_5315 - Variable Editor</span>
        <svg viewBox="0 0 8 8" className="mr-[2px] ml-auto size-[7px]"><path d="M1 1h6v3L4 7 1 4z" fill="#222" /></svg>
      </div>
      <Ruler />
      <div className="flex h-[331px] shrink-0">
        <Canvas />
        <div className="flex w-[12px] flex-col items-center bg-[#f0f0f0]">
          <svg viewBox="0 0 8 12" className="h-[12px] w-[8px]"><path d="M1.500 8L4 5l2.500 3" fill="none" stroke="#333" strokeWidth="1.200" /></svg>
          <div className="mt-[152px] h-[11px] w-[10px] bg-[#c9c9c9]" />
        </div>
      </div>
      <div className="flex flex-1 items-center bg-[#f7f7f7] pl-[13px]">
        <svg viewBox="0 0 8 8" className="size-[7px]"><path d="M5.500 1L2.500 4l3 3" fill="none" stroke="#333" strokeWidth="1.200" /></svg>
      </div>
    </section>
  );
}

const PROPS: [string, string][] = [["Name", "MasterPanel1"], ["Description", ""], ["Back Color", "(0,0,0)"], ["Master Panel Layers", ""], ["Function Keys", ""], ["Placeholder", ""]];

function Inspector() {
  return (
    <section className="flex h-[591px] min-w-0 flex-1 flex-col overflow-hidden border border-[#8c8c8c] bg-white tracking-[-0.500px]">
      <header className="flex h-[12px] shrink-0 items-center justify-between border-b border-[#8c8c8c] bg-[#b4b4b4] pr-[1px] pl-[2px] tracking-[-0.250px] text-white">
        <span>Property Inspector</span>
        <HeadIcons />
      </header>
      <div className="flex h-[17px] shrink-0 items-center pt-[1px] pl-[4px]"><span className="h-full w-[123px] border-r border-[#ededed] leading-[14px]">Master Panel</span></div>
      {Array.from({ length: 44 }, (_, i) => (
        <div key={i} className="flex h-[12.800px] shrink-0 items-center border-b border-[#f1f1f1] pl-[3px]">
          <span className="h-full w-[124px] border-r border-[#ececec] leading-[12px]">{PROPS[i]?.[0]}</span>
          {i === 2 && <span className="ml-[1px] h-[10px] w-[33px] border-2 border-[#a5a5a5] bg-black" />}
          <span className={i === 2 ? "pl-[5px] leading-[12px]" : "pl-[2px] leading-[12px]"}>{PROPS[i]?.[1]}</span>
        </div>
      ))}
    </section>
  );
}

const OBJS: [string, string, string, boolean, string][] = [
  ["tree", "Home_Selected08", "580, -1 x 639, 58", true, ""],
  ["tree", "Alarm_Selected04", "520, -1 x 579, 58", true, ""],
  ["g", "GroupObject02", "461, -1 x 520, 57", false, ""],
  ["A", "Text03", "387, -1 x 466, 23", false, ""],
  ["strd", "StringDisplay01", "386, 25 x 465, 44", false, "_UserName"],
  ["sw", "Switch01", "381, -1 x 461, 19", false, ""],
  ["g", "GroupObject01", "0, -1 x 180, 59", false, ""],
];

function GraphicsList() {
  return (
    <section className="mt-[2px] flex h-[136px] flex-col border border-[#8c8c8c] bg-white tracking-[-0.450px]">
      <header className="flex h-[12px] shrink-0 items-center bg-[#b7b7b7] pl-[2px] tracking-[-0.250px] text-white">Graphics List</header>
      <div className="flex h-[17px] shrink-0 items-center gap-[2.900px] border-b border-[#aaa] bg-linear-to-b from-[#fafafa] to-[#c6c6c6] pl-[2px]">
        {["glPen", "glLink", "|", "layersd", "adown", "aup", "layers", "|", "group", "ungroup", "|", "gx"].map((n, i) => n === "|" ? <span key={i} className="h-[11px] w-px bg-[#c5c5c5]" /> : <Icon key={i} n={n} />)}
      </div>
      <div className="flex h-[15.500px] shrink-0 items-center *:h-full *:border-r *:border-[#e6e6e6] *:leading-[17px]">
        <span className="w-[27px] pl-[4px] tracking-[-0.100px]">Or...</span>
        <span className="w-[84px] pl-[4px]">Object Name</span>
        <span className="w-[84px] pl-[4px]">Position</span>
        <span className="w-[50px] pl-[4px] tracking-[-0.300px]">Animation</span>
        <span className="w-[150px] border-r-0 pl-[4px]">Variables</span>
      </div>
      {OBJS.map(([ic, n, p, t, v], i) => (
        <div key={i} className="flex h-[12.800px] shrink-0 items-center leading-[12px] whitespace-nowrap">
          <span className="w-[27px] pl-[12px]">{i + 1}</span>
          <span className="flex w-[84px] items-center gap-[1px]">
            {ic === "g" ? (
              <><svg viewBox="0 0 8 8" className="ml-[2px] size-[8px]"><path d="M.5.5h7v7h-7zM2 4h4M4 2v4" fill="none" stroke="#222" /></svg><Icon n="groupb" c="size-[11px]" /></>
            ) : <Icon n={ic} c="size-[11px]" />}
            <span>{n}</span>
          </span>
          <span className="w-[85px]">{p}</span>
          <span className="flex w-[49px] items-center">{t && <><Icon n="touch" c="size-[10px]" /><span className="pl-px">Touch</span></>}</span>
          <span className="pl-[1px]">{v}</span>
        </div>
      ))}
    </section>
  );
}

function Feedback() {
  return (
    <section className="mt-[3px] flex h-[79px] flex-col border border-[#8c8c8c] bg-white">
      <header className="flex h-[12px] shrink-0 items-center border-b border-[#8c8c8c] bg-[#b7b7b7] pl-[2px] tracking-[-0.250px] text-white">Feedback Zone</header>
      <div className="flex-1" />
      <div className="flex h-[14px] shrink-0 border-t border-[#999] bg-[#f0f0f0]">
        <span className="-mt-px flex h-[14px] w-[27px] items-center justify-center border-r border-b border-[#999] bg-white pt-[1px] tracking-[-0.350px]">Build</span>
      </div>
    </section>
  );
}

function Btn({ c, children, off }: { c: string; children?: React.ReactNode; off?: boolean }) {
  return <span className={`${c} flex shrink-0 items-center justify-center border ${off ? "border-[#bdbdbd] bg-[#cccccc] text-[#8a8a8a]" : "border-[#adadad] bg-[#e2e2e2] text-black"}`}>{children}</span>;
}

function Radio({ on, children }: { on?: boolean; children: string }) {
  return (
    <span className="flex items-center gap-[2px]">
      <span className="flex size-[9px] items-center justify-center rounded-full border border-[#444] bg-white">{on && <span className="size-[5px] rounded-full bg-[#222]" />}</span>
      <span className="pt-[1.500px]">{children}</span>
    </span>
  );
}

function ActionSettings() {
  return (
    <div className={`absolute top-[199px] left-[458px] flex h-[325px] w-[375px] flex-col border border-[#9a9a9a] bg-[#f0f0f0] text-[8px] tracking-[-0.330px] shadow-[1px_3px_8px_rgba(0,0,0,0.45)] ${TAHOMA}`}>
      <header className={`flex h-[17px] shrink-0 items-center justify-between bg-white pr-[5px] pb-[2px] pl-[2px] text-[8.5px] tracking-[-0.250px] text-[#8f8f8f] ${UI}`}>
        Action Settings
        <svg viewBox="0 0 8 8" className="size-[8px]"><path d="M.5.5l7 7M7.500.5l-7 7" stroke="#888" strokeWidth=".8" /></svg>
      </header>
      <div className="mt-[21px] ml-[26px] flex h-[13px] items-center">
        <span className="w-[61px] pt-[1px]">Description</span>
        <span className="flex h-[13px] w-[255px] items-center border border-[#7a7a7a] bg-white pt-[1px] pl-[3px]">AC7_Logging</span>
      </div>
      <div className="mt-[21px] ml-[26px] flex h-[15px] items-center">
        <span className="w-[39px] pt-[1px]">Operation</span>
        <span className="flex h-[14px] w-[107px] items-center justify-between border border-[#7a7a7a] bg-white pt-[1px] pr-[2px] pl-[2px]">Word
          <svg viewBox="0 0 8 8" className="size-[7px]"><path d="M1 2.500l3 3 3-3" fill="none" stroke="#555" /></svg></span>
        <span className="ml-[69px] flex gap-[1.500px]">
          <Btn c="size-[14.500px]"><Icon n="xbtn" c="size-[11px]" /></Btn>
          <Btn c="size-[14.500px]"><Icon n="upb" c="size-[9px]" /></Btn>
          <Btn c="size-[14.500px]"><Icon n="dnb" c="size-[9px]" /></Btn>
        </span>
      </div>
      <div className="ml-[27px] flex h-[170px]">
        <div className="flex w-[210px] flex-col border border-[#dfdfdf] pl-[6px]">
          <span className="mt-[23px] leading-[10px]">Source</span>
          <span className="mt-[2px] ml-[7px] flex h-[14px] w-[190px] items-center justify-between border border-[#7a7a7a] bg-white pt-[1px] pr-[2px] pl-[3px]">4<Icon n="lamps" c="size-[10px]" /></span>
          <span className="mt-[10px] leading-[10px]">Operation</span>
          <div className="mt-[1.500px] ml-[7px] grid grid-cols-[91px_80px] *:h-[14.200px]">
            <Radio on>Set</Radio><Radio>AND</Radio>
            <Radio>Add</Radio><Radio>OR</Radio>
            <Radio>Subtract</Radio><Radio>XOR</Radio>
          </div>
          <span className="mt-[10.500px] leading-[10px]">Destination</span>
          <span className="mt-[2px] ml-[7px] flex h-[14px] w-[189px] items-center border border-[#668] bg-white pl-[1px]">
            <i className="w-[174px] overflow-hidden pt-[1px] tracking-[-0.350px] whitespace-nowrap text-[#858585]">Enter a valid Variable. Its data type must be Float OR</i>
            <Icon n="ylamp" c="size-[10px]" />
          </span>
        </div>
        <div className="ml-[4px] w-[101px] border border-[#7a7a7a] bg-white pt-[1px] pl-[1px] leading-[10px] whitespace-nowrap">Use Predefined Message[0]</div>
      </div>
      <div className="mt-[5px] ml-[135px] flex gap-[4px]"><Btn off c="h-[12px] w-[49px] pt-[1px]">Apply</Btn><Btn c="h-[12px] w-[49px] pt-[1px]"><b>Add &gt;</b></Btn></div>
      <div className="mt-[18px] ml-[15px] h-[2px] w-[342px] bg-[#bcbcbc]" />
      <div className="mt-[8px] ml-[87px] flex"><Btn c="h-[14px] w-[49px] mr-[4px] pt-[1px]">&lt; Back</Btn><Btn off c="h-[14px] w-[49px] mr-[8px] pt-[1px]">Next &gt;</Btn><Btn c="h-[14px] w-[49px]">{null}</Btn></div>
    </div>
  );
}

function VariablesList() {
  return (
    <div className={`absolute top-[436px] left-[666px] flex h-[225px] w-[405px] flex-col border border-[#6f6f6f] bg-[#f0f0f0] text-[8px] tracking-[-0.330px] shadow-[2px_3px_9px_rgba(0,0,0,0.4)] ${TAHOMA}`}>
      <header className={`flex h-[20px] shrink-0 items-center justify-between bg-white pr-[6px] pl-[4px] text-[8.5px] tracking-[-0.400px] ${UI}`}>
        Variables List
        <svg viewBox="0 0 8 8" className="size-[7.500px]"><path d="M.5.5l7 7M7.500.5l-7 7" stroke="#111" strokeWidth="1.100" /></svg>
      </header>
      <div className="flex h-[17px] shrink-0 items-center border-t border-[#ddd]">
        <Icon n="sq" c="size-[10px]" />
        <Icon n="sqs" c="ml-[6px] size-[11px]" />
        <span className="mx-[5px] h-[12px] w-px bg-[#aaa]" />
        <Icon n="blob" c="size-[11px]" />
        <span className="mr-[4px] ml-[4px] h-[12px] w-px bg-[#aaa]" />
        <span className="flex h-[14px] w-[15px] items-center justify-center bg-[#bfdefa]"><Icon n="disc" c="size-[12px]" /></span>
        <Icon n="step" c="ml-[2px] size-[11px]" />
        <Icon n="wave" c="ml-[4px] size-[11px]" />
        <Icon n="diag" c="ml-[4px] size-[11px]" />
        <Icon n="goldA" c="ml-[4px] size-[11px]" />
        <span className="mx-[5px] h-[12px] w-px bg-[#aaa]" />
        <Icon n="glist" c="size-[10px]" />
        <svg viewBox="0 0 6 4" className="ml-[5px] h-[3px] w-[5px]"><path d="M0 0h6L3 4z" fill="#555" /></svg>
      </div>
      <div className="flex h-[17px] shrink-0 items-center">
        <span className="flex h-[14px] w-[15px] items-center justify-center bg-[#c8c8c8]"><Icon n="star" c="size-[9px]" /></span>
        <span className="ml-[4px] flex h-[14px] w-[15px] items-center justify-center bg-[#c4c4c4]"><Icon n="sqs" c="size-[11px]" /></span>
        <span className="ml-[5px] h-[15px] flex-1 border border-[#555] bg-[#f0f0f0]" />
      </div>
      <div className="mx-[1px] mt-[5px] h-[129px] shrink-0 border border-r-2 border-b-2 border-[#8a8a8a] bg-white pt-[1px] pl-[2px]">
        <div className="flex h-[11px] items-center"><Guide k="-" /><Icon n="device" c="size-[11px]" /><span className="ml-[3px] bg-[#0078d7] px-[1px] leading-[11px] text-white">MyController</span></div>
        <div className="ml-[13.500px] flex h-[11px] items-center"><Guide k="+" /><Icon n="folderOpen" c="size-[11px]" /><span className="ml-[3px]">Application</span></div>
      </div>
      <div className="ml-[3px] flex h-[12px] shrink-0">
        <span className="relative flex h-full w-[28px] items-center justify-center"><svg viewBox="0 0 28 12" className="absolute inset-0 size-full"><path d="M0 0l5 10q1 1.500 3 1.500h14q2 0 3-1.500l3-6" fill="#f8f8f8" stroke="#999" strokeWidth=".8" /></svg><span className="relative pt-[2px]">Vijeo</span></span>
        <span className="relative flex h-full w-[48px] items-center justify-center"><svg viewBox="0 0 48 12" className="absolute inset-0 size-full overflow-visible"><path d="M-3 0l5 10q1 1.500 3 1.500h35q2 0 3-1.500L48 0" fill="#fff" stroke="#999" strokeWidth=".8" /></svg><span className="relative pt-[2px]">SoMachine</span></span>
      </div>
      <div className="mt-[4px] mr-[1px] flex justify-end gap-[3px]"><Btn c="h-[16px] w-[50px] pt-[1px]">OK</Btn><Btn c="h-[16px] w-[49px] pt-[1px]">Cancel</Btn></div>
    </div>
  );
}

export default function App() {
  return (
    <div className={`relative flex h-[720px] w-[1280px] flex-col overflow-hidden bg-black text-[8.5px] tracking-[-0.420px] text-black ${UI}`}>
      <div className="mt-[12px] flex h-[694px] shrink-0">
        <div className="flex w-[5px] shrink-0 flex-col border-r border-[#888] bg-[#dcdcdc]">
          <span className="mt-[4px] h-[8px] w-[4px] rounded-l-full bg-[#398661]" />
          <span className="mt-[67px] h-[20px] w-[4px] border-y border-[#8aa] bg-[#b5c1cc]" />
          <span className="mt-auto mb-[19px] h-[8px] w-[4px] bg-[#3b7295]" />
        </div>
        <div className="flex min-w-0 flex-1 flex-col border-t border-[#8b8b8b] bg-linear-to-r from-[#dadada] to-[#eeeeee]">
          <div className="flex h-[20px] shrink-0 items-center bg-white pl-[6px]">
            <Icon n="app" c="size-[11px]" />
            <span className="ml-[3.500px] tracking-[-0.500px] text-[#929292]">TPN_PLCHMI_18082022_V1_2 - Vijeo-Frame - [HMIGTO5310_5315 - MasterPanel1 - Language1] *</span>
            <svg viewBox="0 0 70 10" className="mr-[6px] ml-auto h-[10px] w-[70px]"><path d="M0 5.500h7M31 2h6.500v6.500H31zM61 2l6.500 6.500M67.500 2L61 8.500" fill="none" stroke="#777" strokeWidth=".9" /></svg>
          </div>
          <nav className="flex h-[16px] shrink-0 items-center pl-[12px] tracking-[-0.350px]">
            {[["File", "w-[22.500px]"], ["Edit", "w-[23.500px]"], ["Build", "w-[27.500px]"], ["HMI", "w-[24px]"], ["Arrange", "w-[38px]"], ["Variable", "w-[38.500px]"], ["Report", "w-[33px]"], ["View", "w-[27px]"], ["Draw", "w-[28px]"], ["Tools", "w-[29.500px]"], ["Window", "w-[39.500px]"], ["Help", "w-[30px]"]].map(([t, w]) => <span key={t} className={w}>{t}</span>)}
          </nav>
          <div className="flex h-[17.500px] shrink-0 items-center pl-[2px]">
            <Bar w="w-[132px] mr-[1px]" items="page open save print check sim down flash" />
            <Bar w="w-[148px] mr-[1px]" items="undo redo cut copy paste pastex redx ga gtree" />
            <Bar w="w-[103px] mr-[1px]" items="left right stop refresh home gpage" />
            <Bar w="w-[189px]" items="hand state lock minus plus">
              <span className="flex h-[12px] w-[99px] items-center justify-between bg-white pl-[2px] text-[8px] tracking-[-0.150px]">State: 3
                <span className="flex h-[10px] w-[9px] items-center justify-center bg-[#e4e4e4]"><svg viewBox="0 0 6 4" className="h-[3px] w-[5px]"><path d="M0 0h6L3 4z" fill="#222" /></svg></span>
              </span>
            </Bar>
          </div>
          <div className="flex h-[17.500px] shrink-0 items-center pl-[2px]">
            <Bar w="w-[103px] mr-[1px]" items="*t1 *t2 *t3 red3d *t5 find" />
            <Bar w="w-[300px] mr-[1px]" items="layers layersd | rotl rotr | flip flipv | group ungroup | box | al1 al2 al3 al4 al5 al6 | sp1 sp2" />
            <Bar w="w-[88px] mr-[1px]" items="gbox gbox gdot garr2 garr2" />
            <Bar w="w-[168px]" items="gform | gline gbr gfun gst garr gpile garr2 gtr gtr" />
          </div>
          <div className="flex h-[17px] shrink-0 items-center pl-[2px]">
            <Bar w="w-[494px] mr-[2px]" items="cursor | dot line v poly v bez curve rect v circ arc pie pent v lines v A tree v | sw v bulb v strd v ab v gauge bars v meter v cam reda v trend" />
            <Bar w="w-[120px]" items="zoomc v zoomg | zoomg fit v gridi v" />
          </div>
          <div className="flex h-[591px] shrink-0 gap-[3px] bg-[#d6d6d6]">
            <div className="flex w-[964px] shrink-0 flex-col">
              <div className="flex h-[371px] shrink-0 justify-between"><Navigator /><Docs /></div>
              <GraphicsList />
              <Feedback />
            </div>
            <Inspector />
          </div>
          <div className="flex flex-1 items-center justify-end gap-[4px] border-b border-[#999] bg-[#f0f0f0] pt-[1px] pr-[6px] text-[7.500px] leading-[9px] tracking-[-0.100px] text-[#8d8d8d]">
            <span>CAP</span><span className="text-black">NUM</span><span>SCRL</span>
          </div>
        </div>
      </div>
      <div className="flex h-[2px] shrink-0 items-end overflow-hidden bg-[#b0b0b0] pl-[424px] text-[8px] leading-[8px] tracking-normal whitespace-nowrap">
        <span className="w-[292px]">Device User: Administrator</span>
        <span className="w-[63px] bg-[#4da04d] text-center">RUN</span>
        <span className="w-[130px] pl-[55px]">Program loaded</span>
        <span className="w-[204px] pl-[55px]">Program modified (Online change)</span>
        <span className="pl-[55px]">Project user: (nobody)</span>
      </div>
      <ActionSettings />
      <VariablesList />
      <svg viewBox="0 0 10 15" className="absolute top-[584px] left-[717px] h-[14px] w-[9px]"><path d="M.7 1v11.500l3-2.700 2 4.200 2-1-2-4H9z" fill="#e5128e" stroke="#4a0630" strokeWidth=".9" /></svg>
    </div>
  );
}
